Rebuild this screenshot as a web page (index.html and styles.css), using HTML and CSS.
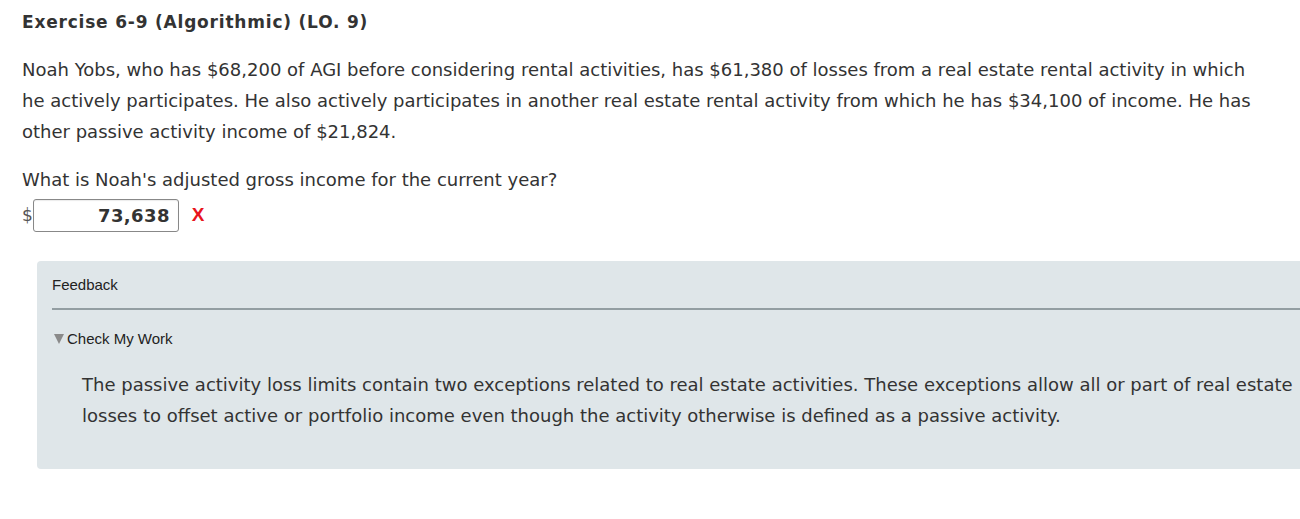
FILE: index.html
```html
<!DOCTYPE html>
<html>
<head>
<meta charset="utf-8">
<link rel="stylesheet" href="styles.css">
</head>
<body>
<div class="page">
  <h1 class="title">Exercise 6-9 (Algorithmic) (LO. 9)</h1>
  <p class="problem">Noah Yobs, who has $68,200 of AGI before considering rental activities, has $61,380 of losses from a real estate rental activity in which he actively participates. He also actively participates in another real estate rental activity from which he has $34,100 of income. He has other passive activity income of $21,824.</p>
  <p class="question">What is Noah's adjusted gross income for the current year?</p>
  <div class="answer">
    <span class="dollar">$</span>
    <span class="input">73,638</span>
    <span class="wrong">X</span>
  </div>
  <div class="feedback">
    <div class="fb-head">Feedback</div>
    <div class="fb-toggle"><span class="tri"></span>Check My Work</div>
    <p class="fb-text">The passive activity loss limits contain two exceptions related to real estate activities. These exceptions allow all or part of real estate losses to offset active or portfolio income even though the activity otherwise is defined as a passive activity.</p>
  </div>
</div>
</body>
</html>
```
FILE: styles.css
```css
html, body {
  margin: 0;
  padding: 0;
  background: #fff;
  overflow: hidden;
}
body {
  font-family: "DejaVu Sans", Verdana, sans-serif;
  color: #333;
  font-size: 18px;
}
.page {
  padding: 11px 0 0 22px;
  width: 1300px;
  box-sizing: border-box;
}
.title {
  font-size: 17px;
  font-weight: bold;
  letter-spacing: 0.8px;
  margin: 0;
  line-height: 22px;
  color: #333;
}
.problem {
  margin: 21px 0 0 0;
  line-height: 31px;
  width: 1250px;
}
.question {
  margin: 17px 0 0 0;
  line-height: 31px;
}
.answer {
  display: flex;
  align-items: center;
  margin-top: 3px;
  height: 34px;
}
.dollar {
  font-size: 17px;
  color: #555;
}
.input {
  width: 146px;
  height: 33px;
  box-sizing: border-box;
  border: 1px solid #888;
  border-radius: 3px;
  text-align: right;
  font-weight: bold;
  font-size: 18px;
  letter-spacing: 0.4px;
  line-height: 31px;
  padding-right: 8px;
  color: #333;
  box-shadow: inset 0 1px 1px rgba(0,0,0,0.08);
}
.wrong {
  color: #e8141c;
  font-weight: bold;
  font-family: "Liberation Sans", Arial, sans-serif;
  font-size: 19px;
  margin-left: 13px;
}
.feedback {
  margin: 29px 0 0 15px;
  background: #dfe6e9;
  border-radius: 4px 0 0 4px;
  height: 208px;
  padding: 0 0 0 15px;
  font-family: "Liberation Sans", Arial, sans-serif;
  font-size: 15px;
}
.fb-head {
  line-height: 16px;
  padding-top: 16px;
  padding-bottom: 15px;
  border-bottom: 2px solid #939ea2;
  color: #222;
}
.fb-toggle {
  margin-top: 21px;
  line-height: 16px;
  display: flex;
  align-items: center;
  color: #222;
}
.tri {
  width: 0;
  height: 0;
  border-left: 5px solid transparent;
  border-right: 5px solid transparent;
  border-top: 10px solid #8a8a8a;
  margin: 0 3px 0 2px;
}
.fb-text {
  font-family: "DejaVu Sans", Verdana, sans-serif;
  font-size: 18px;
  color: #333;
  margin: 22px 0 0 30px;
  line-height: 31px;
  width: 1216px;
}
```
